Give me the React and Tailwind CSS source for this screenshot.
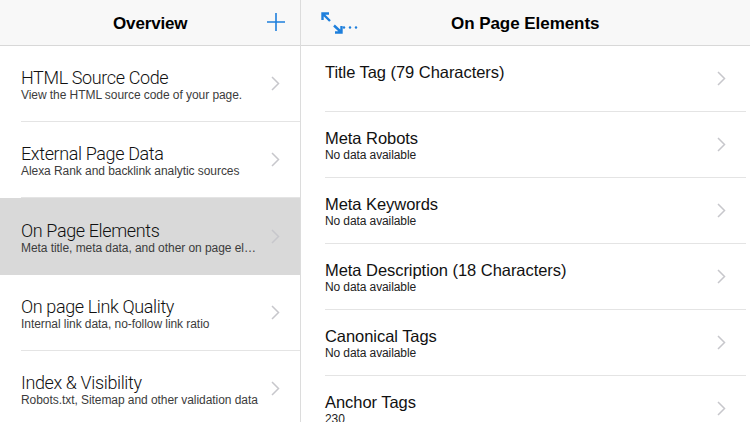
const left = [
  ["HTML Source Code", "View the HTML source code of your page.", false, "h-[76px]"],
  ["External Page Data", "Alexa Rank and backlink analytic sources", false, "h-[76px]"],
  ["On Page Elements", "Meta title, meta data, and other on page el…", true, "h-[77px]"],
  ["On page Link Quality", "Internal link data, no-follow link ratio", false, "h-[76px]"],
  ["Index & Visibility", "Robots.txt, Sitemap and other validation data", false, "h-[76px]"],
];
const right = [
  ["Title Tag (79 Characters)", null],
  ["Meta Robots", "No data available"],
  ["Meta Keywords", "No data available"],
  ["Meta Description (18 Characters)", "No data available"],
  ["Canonical Tags", "No data available"],
  ["Anchor Tags", "230"],
];

function Chevron({ className }) {
  return (
    <svg width="9" height="15" viewBox="0 0 9 15" fill="none" className={className}>
      <path d="M1 1l6.5 6.5L1 14" stroke="#c7c7cc" strokeWidth="1.5" />
    </svg>
  );
}

export default function App() {
  return (
    <div className="w-[750px] h-[422px] overflow-hidden flex bg-white text-black font-['Liberation_Sans',sans-serif]">
      <div className="w-[301px] shrink-0 border-r border-[#dcdcdc] flex flex-col">
        <header className="h-[46px] shrink-0 bg-[#f8f8f8] border-b border-[#d8d8d8] flex items-center justify-between pl-[113px] pr-[15px]">
          <span className="text-[17px] font-bold leading-none tracking-[-0.15px] mt-[1px]">Overview</span>
          <svg width="18" height="18" viewBox="0 0 18 18" fill="none" className="mb-[2px]">
            <path d="M9 0v18M0 9h18" stroke="#1e7fdc" strokeWidth="1.6" />
          </svg>
        </header>
        <div className="flex-1 overflow-hidden">
          {left.map(([t, s, sel, h]) => (
            <div key={t} className={`${h} pl-[21px] relative flex ${sel ? "bg-[#d9d9d9]" : ""}`}>
              <div className={`flex-1 flex items-center pr-[20px] ${sel ? "" : "border-b border-[#e4e4e4]"}`}>
                <div className="flex-1 min-w-0 pt-[3px]">
                  <div className="font-['Roboto',sans-serif] font-light text-[18px] leading-[20px] tracking-[-0.38px] text-[#111]">{t}</div>
                  <div className="text-[12px] leading-[15px] tracking-[-0.06px] text-[#3c3c3c] whitespace-nowrap">{s}</div>
                </div>
                <Chevron className="shrink-0" />
              </div>
            </div>
          ))}
        </div>
      </div>
      <div className="flex-1 min-w-0 flex flex-col">
        <header className="h-[46px] shrink-0 bg-[#f8f8f8] border-b border-[#d8d8d8] flex items-center pl-[20px] relative">
          <svg width="38" height="24" viewBox="0 0 38 24" fill="none">
            <path d="M2 3l7 7M1.500 9V2.500H8M20 21l-7-6.500M20.500 15v6.500H14" stroke="#1e7fdc" strokeWidth="2.4" />
            <circle cx="23" cy="16.500" r="1.200" fill="#1e7fdc" />
            <circle cx="29" cy="16.500" r="1.200" fill="#1e7fdc" />
            <circle cx="35" cy="16.500" r="1.200" fill="#1e7fdc" />
          </svg>
          <span className="ml-[92px] text-[17px] font-bold leading-none tracking-[-0.05px] mt-[1px]">On Page Elements</span>
        </header>
        <div className="flex-1 overflow-hidden pl-[24px] pr-[4px]">
          {right.map(([t, s]) => (
            <div key={t} className="h-[66px] border-b border-[#e4e4e4] flex pr-[20px]">
              <div className="flex-1 min-w-0 pt-[16px]">
                <div className="text-[16.5px] leading-[20px] tracking-[-0.05px] text-[#111]">{t}</div>
                {s && <div className="text-[12px] leading-[13px] mt-[1px] tracking-[-0.1px] text-[#222]">{s}</div>}
              </div>
              <Chevron className="shrink-0 mt-[25px]" />
            </div>
          ))}
        </div>
      </div>
    </div>
  );
}
